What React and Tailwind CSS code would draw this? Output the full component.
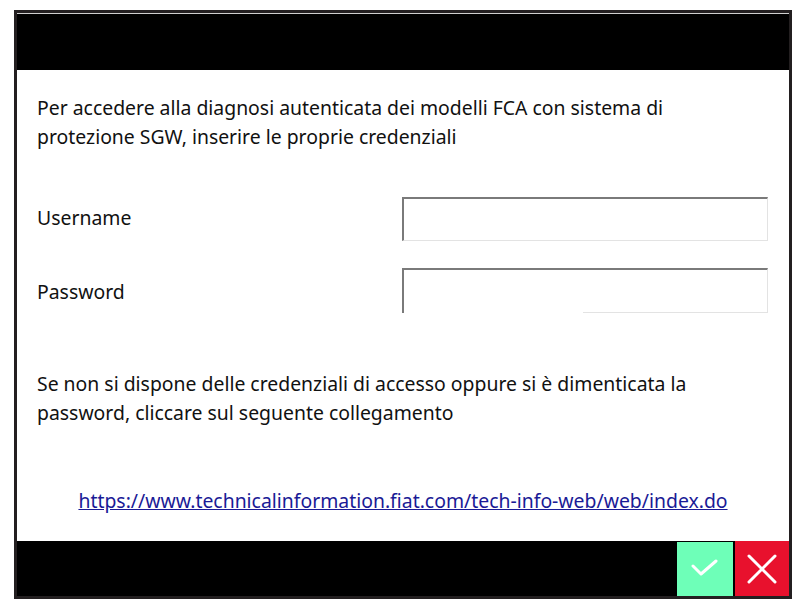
export default function App() {
  const font = { fontFamily: '"Noto Sans", "Open Sans", sans-serif' };
  return (
    <div className="w-[809px] h-[608px] bg-white pt-[10px] pl-[14px]" style={font}>
      <div className="w-[778px] h-[589px] border-[3px] border-[#231f20] flex flex-col">
        <div className="h-px bg-[#cfcfcf]" />
        <div className="h-[56px] bg-black" />
        <div className="h-[471px] bg-white pl-[20px] pr-[20px] text-[19.4px] text-[#111] leading-[29px]">
          <p className="pt-[23px]">
            Per accedere alla diagnosi autenticata dei modelli FCA con sistema di
            <br />
            protezione SGW, inserire le proprie credenziali
          </p>
          <div className="mt-[46px] h-[44px] flex items-center">
            <div className="w-[365px] -mt-[4px]">Username</div>
            <div className="w-[366px] h-[44px] border-t-2 border-l-2 border-[#7a7a7a] border-r border-r-[#e3e3e3] border-b border-b-[#e3e3e3]" />
          </div>
          <div className="mt-[27px] h-[45px] flex items-center">
            <div className="w-[365px] mt-[2px]">Password</div>
            <div className="relative w-[366px] h-[45px] border-t-2 border-l-2 border-[#7a7a7a] border-r border-r-[#e3e3e3]">
              <div className="absolute left-[179px] right-0 -bottom-0 h-px bg-[#e3e3e3]" />
            </div>
          </div>
          <p className="mt-[56px]">
            Se non si dispone delle credenziali di accesso oppure si è dimenticata la
            <br />
            password, cliccare sul seguente collegamento
          </p>
          <div className="mt-[59px] text-center">
            <a href="#" className="text-[#1a1a96] underline">
              https://www.technicalinformation.fiat.com/tech-info-web/web/index.do
            </a>
          </div>
        </div>
        <div className="h-[55px] bg-black flex justify-end items-end">
          <div className="w-[56px] h-[54px] bg-[#6effb8] flex items-center justify-center">
            <svg width="28" height="24" viewBox="0 0 28 24">
              <path d="M2 9 L10 17 L25 4" fill="none" stroke="white" strokeWidth="3" strokeLinecap="round" strokeLinejoin="round" />
            </svg>
          </div>
          <div className="w-[2px]" />
          <div className="w-[54px] h-[55px] bg-[#e8112d] flex items-center justify-center">
            <svg width="32" height="32" viewBox="0 0 32 32">
              <path d="M3 3 L29 29 M29 3 L3 29" fill="none" stroke="white" strokeWidth="3" strokeLinecap="round" />
            </svg>
          </div>
        </div>
      </div>
    </div>
  );
}
